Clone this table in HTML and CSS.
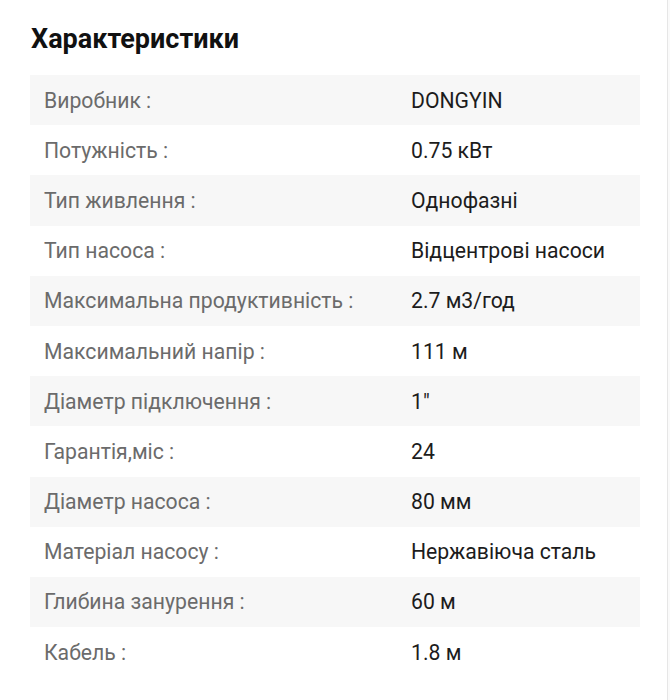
FILE: index.html
```html
<!DOCTYPE html>
<html lang="uk">
<head>
<meta charset="utf-8">
<title>Характеристики</title>
<link rel="stylesheet" href="styles.css">
</head>
<body>
<div class="page">
  <h2 class="title">Характеристики</h2>
  <div class="specs">
    <div class="row"><div class="label">Виробник :</div><div class="value">DONGYIN</div></div>
    <div class="row"><div class="label">Потужність :</div><div class="value">0.75 кВт</div></div>
    <div class="row"><div class="label">Тип живлення :</div><div class="value">Однофазні</div></div>
    <div class="row"><div class="label">Тип насоса :</div><div class="value">Відцентрові насоси</div></div>
    <div class="row"><div class="label">Максимальна продуктивність :</div><div class="value">2.7 м3/год</div></div>
    <div class="row"><div class="label">Максимальний напір :</div><div class="value">111 м</div></div>
    <div class="row"><div class="label">Діаметр підключення :</div><div class="value">1"</div></div>
    <div class="row"><div class="label">Гарантія,міс :</div><div class="value">24</div></div>
    <div class="row"><div class="label">Діаметр насоса :</div><div class="value">80 мм</div></div>
    <div class="row"><div class="label">Матеріал насосу :</div><div class="value">Нержавіюча сталь</div></div>
    <div class="row"><div class="label">Глибина занурення :</div><div class="value">60 м</div></div>
    <div class="row"><div class="label">Кабель :</div><div class="value">1.8 м</div></div>
  </div>
</div>
</body>
</html>
```
FILE: styles.css
```css
html, body {
  margin: 0;
  padding: 0;
  background: #fafafa;
}
body {
  font-family: Roboto, "Noto Sans", sans-serif;
  height: 700px;
  overflow: hidden;
}
.page {
  width: 668px;
  height: 700px;
  background: #ffffff;
  border-right: 1px solid #e6e6e6;
  padding: 0 30px;
  box-sizing: border-box;
}
.title {
  margin: 0;
  padding: 23px 0 0 1px;
  height: 75px;
  box-sizing: border-box;
  font-size: 27px;
  font-weight: 700;
  color: #111111;
  line-height: 32px;
}
.specs {
  width: 610px;
}
.row {
  display: grid;
  grid-template-columns: 367px 1fr;
  align-items: center;
  height: 50.2px;
  padding-left: 14px;
  font-size: 21.2px;
}
.row:nth-child(odd) {
  background: #f7f7f7;
}
.label {
  color: #6b6b6b;
}
.value {
  color: #1c1c1c;
}
```
